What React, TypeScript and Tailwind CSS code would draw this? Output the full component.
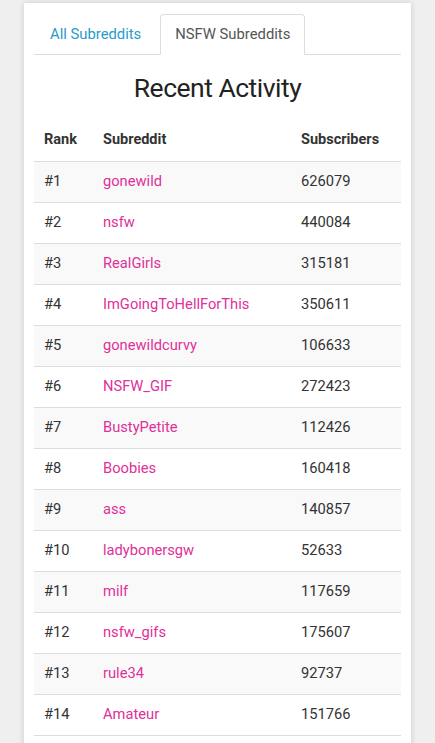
import { useState } from 'react';

interface Row {
    rank: number;
    name: string;
    subscribers: number;
}

const rows: Row[] = [
    { rank: 1, name: 'gonewild', subscribers: 626079 },
    { rank: 2, name: 'nsfw', subscribers: 440084 },
    { rank: 3, name: 'RealGirls', subscribers: 315181 },
    { rank: 4, name: 'ImGoingToHellForThis', subscribers: 350611 },
    { rank: 5, name: 'gonewildcurvy', subscribers: 106633 },
    { rank: 6, name: 'NSFW_GIF', subscribers: 272423 },
    { rank: 7, name: 'BustyPetite', subscribers: 112426 },
    { rank: 8, name: 'Boobies', subscribers: 160418 },
    { rank: 9, name: 'ass', subscribers: 140857 },
    { rank: 10, name: 'ladybonersgw', subscribers: 52633 },
    { rank: 11, name: 'milf', subscribers: 117659 },
    { rank: 12, name: 'nsfw_gifs', subscribers: 175607 },
    { rank: 13, name: 'rule34', subscribers: 92737 },
    { rank: 14, name: 'Amateur', subscribers: 151766 },
];

export default function App() {
    const [tab, setTab] = useState<'all' | 'nsfw'>('nsfw');

    return (
        <div className="min-h-screen bg-[#efefef] pt-[3px] font-['Roboto',sans-serif]">
            <div className="mx-[24px] bg-white px-[10px] pt-[11px] pb-4 shadow-[0_0_6px_rgba(0,0,0,0.15)]">
                {/* Tabs */}
                <div className="flex border-b border-[#dddddd]">
                    <button
                        onClick={() => setTab('all')}
                        className={`-mb-px mr-[3px] h-[41px] rounded-t-[4px] border px-[15px] text-[14.8px] ${tab === 'all'
                            ? 'border-[#dddddd] border-b-white bg-white text-[#555555]'
                            : 'border-transparent text-[#2a9bc9]'
                            }`}
                    >
                        All Subreddits
                    </button>
                    <button
                        onClick={() => setTab('nsfw')}
                        className={`-mb-px h-[41px] rounded-t-[4px] border px-[14px] text-[14.8px] ${tab === 'nsfw'
                            ? 'border-[#dddddd] border-b-white bg-white text-[#555555]'
                            : 'border-transparent text-[#2a9bc9]'
                            }`}
                    >
                        NSFW Subreddits
                    </button>
                </div>

                <h1 className="mt-[18px] mb-[17px] text-center text-[26.5px] leading-[30px] font-[450] tracking-[-0.5px] text-[#222222]">
                    Recent Activity
                </h1>

                <table className="w-full table-fixed border-collapse text-[14.7px] text-[#333333]">
                    <thead>
                        <tr className="h-[41px] text-left text-[14.5px]">
                            <th className="w-[59px] px-[10px] font-bold">Rank</th>
                            <th className="w-[198px] px-[10px] font-bold">Subreddit</th>
                            <th className="px-[10px] font-bold">Subscribers</th>
                        </tr>
                    </thead>
                    <tbody>
                        {rows.map((row, i) => (
                            <tr
                                key={row.rank}
                                className={`h-[41px] border-y border-[#dddddd] ${i % 2 === 0 ? 'bg-[#f9f9f9]' : 'bg-white'}`}
                            >
                                <td className="px-[10px]">#{row.rank}</td>
                                <td className="px-[10px]">
                                    <a href="#" className="text-[#e0309a]">{row.name}</a>
                                </td>
                                <td className="px-[10px]">{row.subscribers}</td>
                            </tr>
                        ))}
                    </tbody>
                </table>
            </div>
        </div>
    );
}
